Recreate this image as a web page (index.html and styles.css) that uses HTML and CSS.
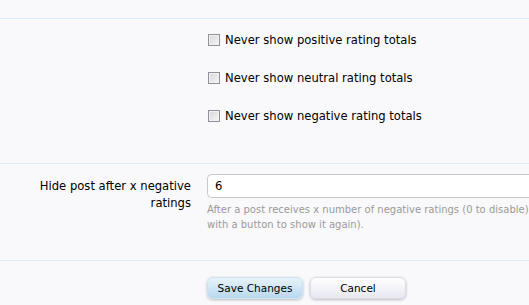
FILE: index.html
```html
<!DOCTYPE html>
<html>
<head>
<meta charset="utf-8">
<link rel="stylesheet" href="styles.css">
</head>
<body>
<div class="page">
  <div class="top-space"></div>
  <div class="section checks">
    <div class="label-col"></div>
    <div class="ctrl-col">
      <label class="check"><span class="box"></span>Never show positive rating totals</label>
      <label class="check"><span class="box"></span>Never show neutral rating totals</label>
      <label class="check"><span class="box"></span>Never show negative rating totals</label>
    </div>
  </div>
  <div class="section hide">
    <div class="label-col"><span class="lbl">Hide post after x negative ratings</span></div>
    <div class="ctrl-col">
      <div class="input">6</div>
      <p class="explain">After a post receives x number of negative ratings (0 to disable) with a button to show it again).</p>
    </div>
  </div>
  <div class="section buttons">
    <div class="label-col"></div>
    <div class="ctrl-col btns">
      <span class="btn primary">Save Changes</span>
      <span class="btn">Cancel</span>
    </div>
  </div>
</div>
</body>
</html>
```
FILE: styles.css
```css
html, body {
  margin: 0;
  padding: 0;
  background: #f9f9fb;
  overflow: hidden;
}
body {
  font-family: "DejaVu Sans", sans-serif;
  font-size: 11.6px;
  color: #000;
  width: 529px;
  height: 305px;
}
.page {
  width: 529px;
}
.top-space {
  height: 18px;
}
.section {
  display: flex;
  border-top: 1px solid #d7edfc;
}
.label-col {
  width: 191px;
  flex: none;
  text-align: right;
  padding-right: 16px;
}
.ctrl-col {
  flex: 1;
  min-width: 0;
}
.checks {
  padding-top: 10px;
  height: 134px;
}
.check {
  display: flex;
  align-items: center;
  height: 22px;
  margin-bottom: 16px;
  color: #000;
  white-space: nowrap;
  padding-left: 1px;
}
.box {
  width: 10px;
  height: 10px;
  border: 1px solid #8f8f9d;
  background: linear-gradient(135deg, #d6d6d6, #f6f6f6);
  box-shadow: inset 0 0 0 1px #f2f2f2;
  margin-right: 5px;
  flex: none;
}
.hide {
  padding-top: 10px;
  height: 86px;
}
.lbl {
  display: inline-block;
  width: 160px;
  text-align: right;
  padding-top: 4px;
  line-height: 17px;
}
.input {
  height: 24px;
  border: 1px solid #c9c9c9;
  border-right: none;
  border-radius: 5px 0 0 5px;
  background: #fff;
  box-sizing: border-box;
  padding: 4px 7px;
  line-height: 14px;
}
.explain {
  margin: 4px 0 0 0;
  font-size: 10px;
  line-height: 15px;
  color: #999;
  width: 330px;
}
.buttons {
  padding-top: 16px;
}
.btns {
  display: flex;
  gap: 7px;
}
.btn {
  width: 96px;
  height: 22px;
  box-sizing: border-box;
  border: 1px solid #dcdcea;
  border-radius: 6px;
  background: linear-gradient(#ffffff, #e7e7f1);
  box-shadow: 0 1px 3px rgba(0,0,0,0.25);
  text-align: center;
  line-height: 20px;
  font-size: 10.5px;
  color: #000;
}
.btn.primary {
  background: linear-gradient(#e7f3fb, #b9d8ee);
  border-color: #cde3f3;
}
```
